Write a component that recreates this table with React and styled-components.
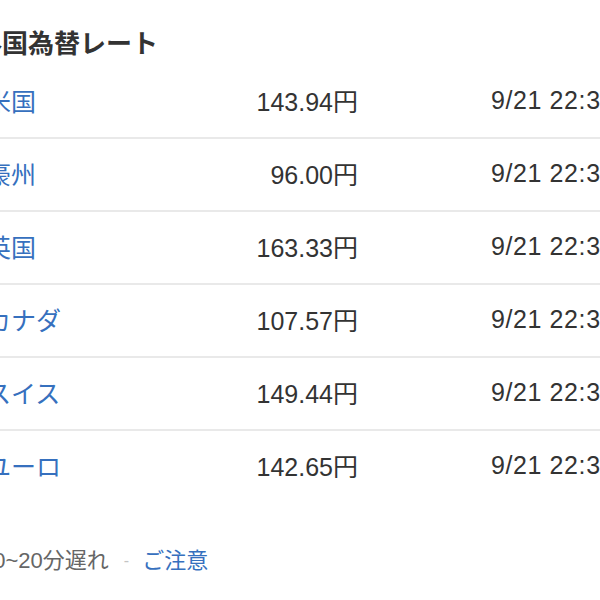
import React from 'react';
import styled, { createGlobalStyle } from 'styled-components';

const GlobalStyle = createGlobalStyle`
  html, body {
    margin: 0;
    padding: 0;
    background: #fff;
    overflow: hidden;
  }
  body {
    font-family: "Liberation Sans", "Noto Sans CJK JP", sans-serif;
    color: #333;
  }
`;

const PageView = styled.div`
  width: 700px;
  margin-left: -24px;
  padding-top: 26px;
`;

const TitleView = styled.h2`
  margin: 0 0 4px;
  font-size: 26px;
  line-height: 36px;
  font-weight: 700;
  color: #333;
`;

const ListView = styled.div`
  display: flex;
  flex-direction: column;
`;

const RowView = styled.div`
  display: grid;
  grid-template-columns: 200px 172px 133px auto;
  align-items: center;
  height: 71px;
  padding-left: 10px;
  padding-bottom: 3px;
  box-sizing: border-box;
  font-size: 25px;
  border-bottom: ${props => (props.last ? 'none' : '2px solid #e9e9e9')};
  height: ${props => (props.last ? '71px' : '73px')};
`;

const NameView = styled.a`
  color: #3670be;
  text-decoration: none;
`;

const PriceView = styled.span`
  text-align: right;
  color: #333;
`;

const TimeView = styled.span`
  grid-column: 4;
  white-space: nowrap;
  letter-spacing: 0.6px;
  color: #333;
`;

const FooterView = styled.div`
  display: flex;
  align-items: center;
  margin-top: 44px;
  padding-left: 5px;
  font-size: 22px;
  line-height: 30px;
  color: #666;
`;

const DashView = styled.span`
  margin: 0 13px 0 15px;
  color: #c4c4c4;
  font-size: 16px;
`;

const LinkView = styled.a`
  color: #3670be;
  text-decoration: none;
`;

const rates = [
  { name: '米国', price: '143.94円', time: '9/21 22:30' },
  { name: '豪州', price: '96.00円', time: '9/21 22:30' },
  { name: '英国', price: '163.33円', time: '9/21 22:30' },
  { name: 'カナダ', price: '107.57円', time: '9/21 22:30' },
  { name: 'スイス', price: '149.44円', time: '9/21 22:30' },
  { name: 'ユーロ', price: '142.65円', time: '9/21 22:30' },
];

const App = () => (
  <PageView>
    <GlobalStyle />
    <TitleView>外国為替レート</TitleView>
    <ListView>
      {rates.map((item, index) => (
        <RowView key={item.name} last={index === rates.length - 1}>
          <NameView href="#">{item.name}</NameView>
          <PriceView>{item.price}</PriceView>
          <TimeView>{item.time}</TimeView>
        </RowView>
      ))}
    </ListView>
    <FooterView>
      <span>10~20分遅れ</span>
      <DashView>-</DashView>
      <LinkView href="#">ご注意</LinkView>
    </FooterView>
  </PageView>
);

export default App;
